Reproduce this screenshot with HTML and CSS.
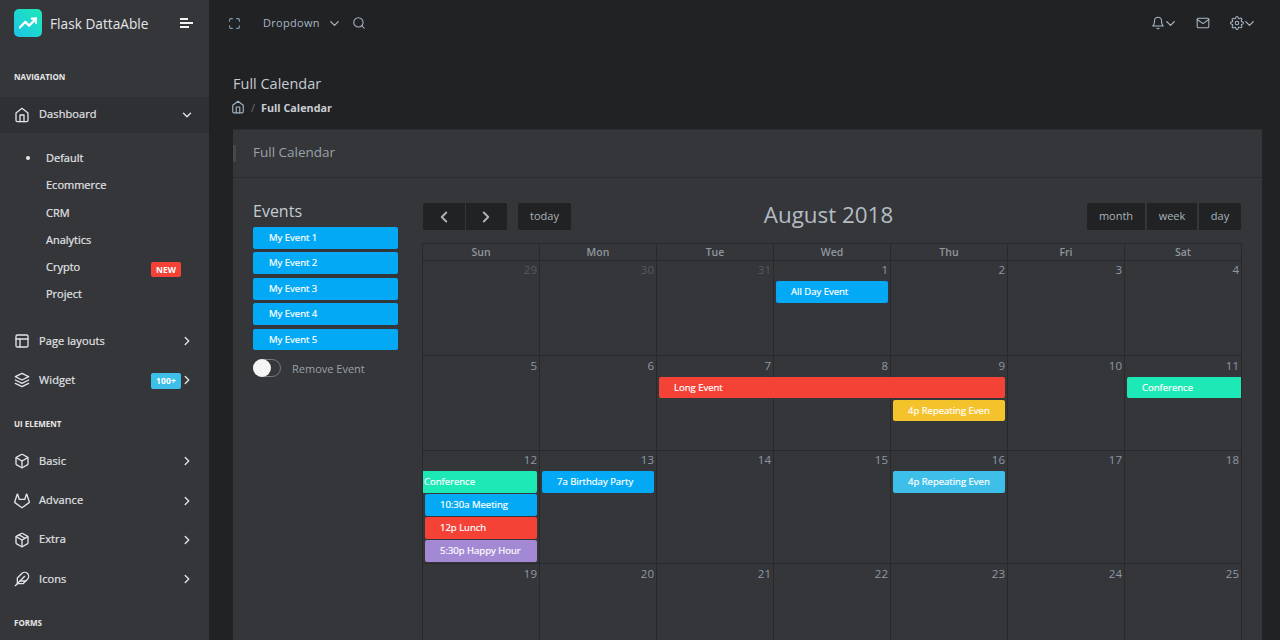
FILE: index.html
```html
<!DOCTYPE html>
<html lang="en">
<head>
    <meta charset="UTF-8">
    <title>Full Calendar</title>
    <link rel="stylesheet" href="styles.css">
</head>
<body>

<svg class="sprite" xmlns="http://www.w3.org/2000/svg">
    <symbol id="i-home" viewBox="0 0 24 24"><path d="M3 9l9-7 9 7v11a2 2 0 0 1-2 2H5a2 2 0 0 1-2-2z"/><polyline points="9 22 9 12 15 12 15 22"/></symbol>
    <symbol id="i-layout" viewBox="0 0 24 24"><rect x="3" y="3" width="18" height="18" rx="2"/><line x1="3" y1="9" x2="21" y2="9"/><line x1="9" y1="21" x2="9" y2="9"/></symbol>
    <symbol id="i-layers" viewBox="0 0 24 24"><polygon points="12 2 2 7 12 12 22 7 12 2"/><polyline points="2 17 12 22 22 17"/><polyline points="2 12 12 17 22 12"/></symbol>
    <symbol id="i-box" viewBox="0 0 24 24"><path d="M21 16V8a2 2 0 0 0-1-1.73l-7-4a2 2 0 0 0-2 0l-7 4A2 2 0 0 0 3 8v8a2 2 0 0 0 1 1.73l7 4a2 2 0 0 0 2 0l7-4A2 2 0 0 0 21 16z"/><polyline points="3.27 6.96 12 12.01 20.73 6.96"/><line x1="12" y1="22.08" x2="12" y2="12"/></symbol>
    <symbol id="i-package" viewBox="0 0 24 24"><line x1="16.5" y1="9.4" x2="7.5" y2="4.21"/><path d="M21 16V8a2 2 0 0 0-1-1.73l-7-4a2 2 0 0 0-2 0l-7 4A2 2 0 0 0 3 8v8a2 2 0 0 0 1 1.73l7 4a2 2 0 0 0 2 0l7-4A2 2 0 0 0 21 16z"/><polyline points="3.27 6.96 12 12.01 20.73 6.96"/><line x1="12" y1="22.08" x2="12" y2="12"/></symbol>
    <symbol id="i-gitlab" viewBox="0 0 24 24"><path d="M22.65 14.39L12 22.13 1.35 14.39a.84.84 0 0 1-.3-.94l1.22-3.78 2.44-7.51A.42.42 0 0 1 4.82 2a.43.43 0 0 1 .58 0 .42.42 0 0 1 .11.18l2.44 7.49h8.1l2.44-7.51A.42.42 0 0 1 18.6 2a.43.43 0 0 1 .58 0 .42.42 0 0 1 .11.18l2.44 7.51L23 13.45a.84.84 0 0 1-.35.94z"/></symbol>
    <symbol id="i-feather" viewBox="0 0 24 24"><path d="M20.24 12.24a6 6 0 0 0-8.49-8.49L5 10.5V19h8.5z"/><line x1="16" y1="8" x2="2" y2="22"/><line x1="17.5" y1="15" x2="9" y2="15"/></symbol>
    <symbol id="i-right" viewBox="0 0 24 24"><polyline points="9 18 15 12 9 6"/></symbol>
    <symbol id="i-left" viewBox="0 0 24 24"><polyline points="15 18 9 12 15 6"/></symbol>
    <symbol id="i-down" viewBox="0 0 24 24"><polyline points="6 9 12 15 18 9"/></symbol>
    <symbol id="i-max" viewBox="0 0 24 24"><path d="M8 3H5a2 2 0 0 0-2 2v3m18 0V5a2 2 0 0 0-2-2h-3m0 18h3a2 2 0 0 0 2-2v-3M3 16v3a2 2 0 0 0 2 2h3"/></symbol>
    <symbol id="i-search" viewBox="0 0 24 24"><circle cx="11" cy="11" r="8"/><line x1="21" y1="21" x2="16.65" y2="16.65"/></symbol>
    <symbol id="i-bell" viewBox="0 0 24 24"><path d="M18 8A6 6 0 0 0 6 8c0 7-3 9-3 9h18s-3-2-3-9"/><path d="M13.73 21a2 2 0 0 1-3.46 0"/></symbol>
    <symbol id="i-mail" viewBox="0 0 24 24"><path d="M4 4h16c1.1 0 2 .9 2 2v12c0 1.1-.9 2-2 2H4c-1.1 0-2-.9-2-2V6c0-1.1.9-2 2-2z"/><polyline points="22,6 12,13 2,6"/></symbol>
    <symbol id="i-gear" viewBox="0 0 24 24"><circle cx="12" cy="12" r="3"/><path d="M19.4 15a1.65 1.65 0 0 0 .33 1.82l.06.06a2 2 0 0 1 0 2.83 2 2 0 0 1-2.83 0l-.06-.06a1.65 1.65 0 0 0-1.82-.33 1.65 1.65 0 0 0-1 1.51V21a2 2 0 0 1-2 2 2 2 0 0 1-2-2v-.09A1.65 1.65 0 0 0 9 19.4a1.65 1.65 0 0 0-1.82.33l-.06.06a2 2 0 0 1-2.83 0 2 2 0 0 1 0-2.83l.06-.06a1.65 1.65 0 0 0 .33-1.82 1.65 1.65 0 0 0-1.51-1H3a2 2 0 0 1-2-2 2 2 0 0 1 2-2h.09A1.65 1.65 0 0 0 4.6 9a1.65 1.65 0 0 0-.33-1.82l-.06-.06a2 2 0 0 1 0-2.83 2 2 0 0 1 2.83 0l.06.06a1.65 1.65 0 0 0 1.82.33H9a1.65 1.65 0 0 0 1-1.51V3a2 2 0 0 1 2-2 2 2 0 0 1 2 2v.09a1.65 1.65 0 0 0 1 1.51 1.65 1.65 0 0 0 1.82-.33l.06-.06a2 2 0 0 1 2.83 0 2 2 0 0 1 0 2.83l-.06.06a1.65 1.65 0 0 0-.33 1.82V9a1.65 1.65 0 0 0 1.51 1H21a2 2 0 0 1 2 2 2 2 0 0 1-2 2h-.09a1.65 1.65 0 0 0-1.51 1z"/></symbol>
    <symbol id="i-trend" viewBox="0 0 24 24"><polyline points="23 6 13.5 15.5 8.5 10.5 1 18"/><polyline points="17 6 23 6 23 12"/></symbol>
</svg>

<div class="app">

    <aside class="sidebar">
        <div class="brand">
            <span class="logo"><svg class="icon logo-icon"><use href="#i-trend"/></svg></span>
            <span class="brand-name">Flask DattaAble</span>
            <span class="burger"><i class="bar-a"></i><i class="bar-b"></i><i class="bar-c"></i></span>
        </div>

        <div class="caption">NAVIGATION</div>
        <a class="nav-item nav-open">
            <svg class="icon nav-icon"><use href="#i-home"/></svg>
            <span class="nav-label">Dashboard</span>
            <svg class="icon nav-arrow"><use href="#i-down"/></svg>
        </a>
        <ul class="submenu">
            <li class="active">Default</li>
            <li>Ecommerce</li>
            <li>CRM</li>
            <li>Analytics</li>
            <li>Crypto <span class="badge badge-red">NEW</span></li>
            <li>Project</li>
        </ul>
        <a class="nav-item">
            <svg class="icon nav-icon"><use href="#i-layout"/></svg>
            <span class="nav-label">Page layouts</span>
            <svg class="icon nav-arrow"><use href="#i-right"/></svg>
        </a>
        <a class="nav-item">
            <svg class="icon nav-icon"><use href="#i-layers"/></svg>
            <span class="nav-label">Widget</span>
            <span class="badge badge-blue">100+</span>
            <svg class="icon nav-arrow"><use href="#i-right"/></svg>
        </a>

        <div class="caption caption-next">UI ELEMENT</div>
        <a class="nav-item">
            <svg class="icon nav-icon"><use href="#i-box"/></svg>
            <span class="nav-label">Basic</span>
            <svg class="icon nav-arrow"><use href="#i-right"/></svg>
        </a>
        <a class="nav-item">
            <svg class="icon nav-icon"><use href="#i-gitlab"/></svg>
            <span class="nav-label">Advance</span>
            <svg class="icon nav-arrow"><use href="#i-right"/></svg>
        </a>
        <a class="nav-item">
            <svg class="icon nav-icon"><use href="#i-package"/></svg>
            <span class="nav-label">Extra</span>
            <svg class="icon nav-arrow"><use href="#i-right"/></svg>
        </a>
        <a class="nav-item">
            <svg class="icon nav-icon"><use href="#i-feather"/></svg>
            <span class="nav-label">Icons</span>
            <svg class="icon nav-arrow"><use href="#i-right"/></svg>
        </a>

        <div class="caption caption-next">FORMS</div>
    </aside>

    <main class="main">
        <header class="topbar">
            <svg class="icon top-max"><use href="#i-max"/></svg>
            <span class="top-link">Dropdown</span>
            <svg class="icon top-chev top-chev-first"><use href="#i-down"/></svg>
            <svg class="icon top-icon top-search"><use href="#i-search"/></svg>
            <div class="top-right">
                <span class="top-group">
                    <svg class="icon top-icon"><use href="#i-bell"/></svg>
                    <svg class="icon top-chev"><use href="#i-down"/></svg>
                </span>
                <svg class="icon top-icon"><use href="#i-mail"/></svg>
                <span class="top-group">
                    <svg class="icon top-icon"><use href="#i-gear"/></svg>
                    <svg class="icon top-chev"><use href="#i-down"/></svg>
                </span>
            </div>
        </header>

        <div class="page-head">
            <h1 class="page-title">Full Calendar</h1>
            <div class="crumbs">
                <svg class="icon crumb-home"><use href="#i-home"/></svg>
                <span class="crumb-sep">/</span>
                <span class="crumb-now">Full Calendar</span>
            </div>
        </div>

        <section class="card">
            <div class="card-head"><h2 class="card-title">Full Calendar</h2></div>
            <div class="card-body">

                <div class="events-panel">
                    <h3 class="events-title">Events</h3>
                    <div class="drag-event">My Event 1</div>
                    <div class="drag-event">My Event 2</div>
                    <div class="drag-event">My Event 3</div>
                    <div class="drag-event">My Event 4</div>
                    <div class="drag-event">My Event 5</div>
                    <div class="remove-row">
                        <span class="switch"><span class="knob"></span></span>
                        <span class="remove-label">Remove Event</span>
                    </div>
                </div>

                <div class="calendar">
                    <div class="toolbar">
                        <div class="tool-left">
                            <button class="fc-btn fc-arrow fc-first"><svg class="icon"><use href="#i-left"/></svg></button>
                            <button class="fc-btn fc-arrow fc-last"><svg class="icon"><use href="#i-right"/></svg></button>
                            <button class="fc-btn fc-today">today</button>
                        </div>
                        <h2 class="month-title">August 2018</h2>
                        <div class="tool-right">
                            <button class="fc-btn fc-month fc-first">month</button>
                            <button class="fc-btn fc-week">week</button>
                            <button class="fc-btn fc-day fc-last">day</button>
                        </div>
                    </div>

                    <div class="grid">
                        <div class="dow-row">
                            <div class="dow">Sun</div><div class="dow">Mon</div><div class="dow">Tue</div><div class="dow">Wed</div><div class="dow">Thu</div><div class="dow">Fri</div><div class="dow">Sat</div>
                        </div>

                        <div class="week">
                            <div class="day c1 muted">29</div><div class="day c2 muted">30</div><div class="day c3 muted">31</div><div class="day c4">1</div><div class="day c5">2</div><div class="day c6">3</div><div class="day c7">4</div>
                            <div class="event blue c4 r2">All Day Event</div>
                        </div>

                        <div class="week week-low">
                            <div class="day c1">5</div><div class="day c2">6</div><div class="day c3">7</div><div class="day c4">8</div><div class="day c5">9</div><div class="day c6">10</div><div class="day c7">11</div>
                            <div class="event red c3 span3 r2">Long Event</div>
                            <div class="event green c7 r2 open-end">Conference</div>
                            <div class="event yellow c5 r3">4p Repeating Even</div>
                        </div>

                        <div class="week week-tall">
                            <div class="day c1">12</div><div class="day c2">13</div><div class="day c3">14</div><div class="day c4">15</div><div class="day c5">16</div><div class="day c6">17</div><div class="day c7">18</div>
                            <div class="event green c1 r2 open-start">Conference</div>
                            <div class="event blue c2 r2">7a Birthday Party</div>
                            <div class="event sky c5 r2">4p Repeating Even</div>
                            <div class="event blue c1 r3">10:30a Meeting</div>
                            <div class="event red c1 r4">12p Lunch</div>
                            <div class="event purple c1 r5">5:30p Happy Hour</div>
                        </div>

                        <div class="week week-low">
                            <div class="day c1">19</div><div class="day c2">20</div><div class="day c3">21</div><div class="day c4">22</div><div class="day c5">23</div><div class="day c6">24</div><div class="day c7">25</div>
                        </div>
                    </div>
                </div>

            </div>
        </section>
    </main>

</div>

</body>
</html>
```

FILE: styles.css
```css
* {
    box-sizing: border-box;
}
html, body {
    margin: 0;
    height: 100%;
    overflow: hidden;
}
body {
    font-family: "Open Sans", sans-serif;
    background-color: #212224;
    color: #adb7be;
    font-size: 12px;
}
h1, h2, h3 {
    margin: 0;
    font-weight: 400;
}
ul {
    list-style: none;
    margin: 0;
    padding: 0;
}
.sprite {
    display: none;
}
.icon {
    fill: none;
    stroke: currentColor;
    stroke-width: 2;
    stroke-linecap: round;
    stroke-linejoin: round;
    display: block;
    flex: none;
}
.app {
    display: flex;
    height: 640px;
    overflow: hidden;
}

/* sidebar */
.sidebar {
    width: 209px;
    flex: none;
    background-color: #35363a;
    color: #e1e3e6;
}
.brand {
    height: 46px;
    display: flex;
    align-items: center;
    padding-left: 14px;
}
.logo {
    width: 28px;
    height: 28px;
    border-radius: 5px;
    background: linear-gradient(-135deg, #1de9b6 0%, #1dc4e9 100%);
    display: flex;
    align-items: center;
    justify-content: center;
    color: #fff;
}
.logo-icon {
    width: 18px;
    height: 18px;
    stroke-width: 3;
}
.brand-name {
    margin-left: 8px;
    width: 130px;
    font-size: 13.7px;
    color: #e4e6e8;
}
.burger {
    display: flex;
    flex-direction: column;
    gap: 2px;
}
.burger i {
    display: block;
    height: 2px;
    background-color: #f4f4f4;
}
.bar-a {
    width: 8px;
}
.bar-b {
    width: 13px;
}
.bar-c {
    width: 9px;
}
.caption {
    font-size: 8px;
    font-weight: 700;
    line-height: 10px;
    padding: 26px 0 15px 14px;
    color: #e8e8e8;
}
.caption-next {
    padding-top: 19px;
    padding-bottom: 12.7px;
}
.nav-item {
    height: 39.3px;
    display: flex;
    align-items: center;
    padding-left: 14px;
    position: relative;
    font-size: 11px;
    font-weight: 500;
    letter-spacing: 0.1px;
    -webkit-text-stroke: 0.2px;
}
.nav-open {
    height: 36px;
    background-color: #2f3034;
}
.nav-icon {
    width: 16px;
    height: 16px;
}
.nav-label {
    margin-left: 9px;
    margin-top: -2px;
}
.nav-open .nav-label {
    margin-top: -4px;
}
.nav-arrow {
    position: absolute;
    left: 180px;
    width: 14px;
    height: 14px;
    stroke-width: 2.4;
}
.submenu {
    padding: 11.2px 0 14.1px;
}
.submenu li {
    height: 27.2px;
    line-height: 27px;
    padding-left: 46px;
    font-size: 11px;
    font-weight: 500;
    -webkit-text-stroke: 0.2px;
    position: relative;
}
.submenu .active::before {
    content: "";
    position: absolute;
    left: 26px;
    top: 12px;
    width: 4px;
    height: 4px;
    border-radius: 50%;
    background-color: #e8e8e8;
}
.badge {
    position: absolute;
    left: 151px;
    width: 30px;
    text-align: center;
    border-radius: 2px;
    color: #fff;
    font-size: 8.5px;
    font-weight: 700;
    -webkit-text-stroke: 0;
}
.badge-red {
    top: 9px;
    height: 15px;
    line-height: 15px;
    background-color: #f44236;
}
.badge-blue {
    top: 12px;
    height: 16px;
    line-height: 16px;
    background-color: #3ebfea;
}

/* main */
.main {
    flex: 1;
    min-width: 0;
    padding-left: 24px;
    padding-right: 18px;
}
.topbar {
    height: 46px;
    display: flex;
    align-items: center;
    color: #a9b7c6;
    font-size: 11px;
    letter-spacing: 0.3px;
}
.top-max {
    width: 13px;
    height: 13px;
    margin-left: -5px;
    color: #7f9fb8;
}
.top-link {
    margin-left: 22px;
    margin-top: -2px;
}
.top-chev {
    width: 15px;
    height: 15px;
    margin: 0 -2px;
}
.top-chev-first {
    margin: 0 -2px 0 7.5px;
}
.top-icon {
    width: 14px;
    height: 14px;
    stroke-width: 1.8;
}
.top-search {
    margin-left: 12px;
}
.top-right {
    margin-left: auto;
    margin-right: 7px;
    display: flex;
    align-items: center;
    gap: 20px;
}
.top-group {
    display: flex;
    align-items: center;
}
.page-head {
    padding-top: 28px;
    height: 83px;
}
.page-title {
    font-size: 14.5px;
    line-height: 19px;
    color: #c4ccd2;
}
.crumbs {
    display: flex;
    align-items: center;
    margin-top: 6px;
    height: 16px;
}
.crumb-home {
    width: 14px;
    height: 14px;
    margin-left: -2px;
    color: #9fb1c0;
}
.crumb-sep {
    margin: 0 6px;
    color: #6b6e73;
    font-size: 11px;
}
.crumb-now {
    font-size: 10.8px;
    font-weight: 700;
    color: #c9ced3;
}

/* card */
.card {
    background-color: #35363a;
    border-top: 1px solid #2c2d30;
    height: 520px;
}
.card-head {
    height: 48px;
    display: flex;
    align-items: center;
    padding-left: 20px;
    padding-bottom: 4px;
    border-bottom: 1px solid #2b2c2f;
    position: relative;
}
.card-head::before {
    content: "";
    position: absolute;
    left: 0;
    top: 15px;
    width: 3px;
    height: 17px;
    background-color: #46484c;
}
.card-title {
    font-size: 13.5px;
    color: #9aa1a8;
}
.card-body {
    display: flex;
    padding: 25px 20px 0;
}

/* events panel */
.events-panel {
    width: 145px;
    flex: none;
    margin-right: 24px;
}
.events-title {
    font-size: 16px;
    line-height: 22px;
    color: #c4ccd2;
    margin-bottom: 5px;
    margin-top: -3px;
}
.drag-event {
    height: 21.8px;
    line-height: 21px;
    margin-bottom: 3.6px;
    padding-left: 16px;
    background-color: #04a9f5;
    border-radius: 2px;
    color: #fff;
    font-size: 9.5px;
    font-weight: 500;
    -webkit-text-stroke: 0.2px;
}
.remove-row {
    display: flex;
    align-items: center;
    margin-top: 9px;
}
.switch {
    width: 28px;
    height: 18px;
    border: 1px solid #777a7f;
    border-radius: 9px;
    display: block;
}
.knob {
    display: block;
    width: 18px;
    height: 18px;
    margin: -1px 0 0 -1px;
    border-radius: 50%;
    background-color: #f5f5f5;
}
.remove-label {
    margin-left: 11px;
    font-size: 11px;
    color: #9aa1a8;
}

/* calendar */
.calendar {
    width: 820px;
    flex: none;
}
.toolbar {
    display: flex;
    align-items: center;
    justify-content: space-between;
    height: 27px;
    margin-bottom: 13px;
}
.tool-left, .tool-right {
    display: flex;
    width: 154px;
}
.tool-left {
    margin-left: 1px;
}
.tool-right {
    justify-content: flex-end;
    margin-right: 1px;
}
.month-title {
    font-size: 22.4px;
    color: #b4bcc3;
    margin-right: 7px;
    margin-top: -5px;
}
.fc-btn {
    height: 27px;
    background-color: #212224;
    border: none;
    color: #a9b3bb;
    font-family: "Open Sans", sans-serif;
    font-size: 11px;
    padding: 0 0 2px;
    display: flex;
    align-items: center;
    justify-content: center;
}
.fc-arrow {
    width: 41.5px;
    padding: 0;
}
.fc-arrow .icon {
    width: 18px;
    height: 18px;
    stroke-width: 2.6;
}
.fc-first {
    border-radius: 2px 0 0 2px;
    margin-right: 1px;
}
.fc-last {
    border-radius: 0 2px 2px 0;
}
.fc-today {
    width: 53px;
    margin-left: 11px;
    border-radius: 2px;
}
.fc-month {
    width: 58px;
    margin-right: 2px;
}
.fc-week {
    width: 50px;
    margin-right: 2px;
}
.fc-day {
    width: 42px;
}
.grid {
    border-right: 1px solid #28292c;
}
.dow-row, .week {
    display: grid;
    grid-template-columns: repeat(7, 117px);
    border-top: 1px solid #28292c;
}
.dow-row {
    height: 17px;
}
.dow {
    border-left: 1px solid #28292c;
    text-align: center;
    font-size: 10.5px;
    line-height: 17px;
    font-weight: 600;
    color: #8f969d;
}
.week {
    height: 95px;
    grid-template-rows: 20px auto auto auto auto 1fr;
}
.week-low {
    grid-template-rows: 21px auto auto auto auto 1fr;
}
.week-tall {
    height: 113px;
}
.day {
    grid-row: 1 / -1;
    border-left: 1px solid #28292c;
    text-align: right;
    padding: 1px 2px 0 0;
    font-size: 11.5px;
    line-height: 16px;
    color: #8e99a4;
}
.week-low .day {
    padding-top: 2px;
}
.muted {
    color: #56585c;
}
.c1 { grid-column-start: 1; }
.c2 { grid-column-start: 2; }
.c3 { grid-column-start: 3; }
.c4 { grid-column-start: 4; }
.c5 { grid-column-start: 5; }
.c6 { grid-column-start: 6; }
.c7 { grid-column-start: 7; }
.r2 { grid-row-start: 2; }
.r3 { grid-row-start: 3; }
.r4 { grid-row-start: 4; }
.r5 { grid-row-start: 5; }
.span3 { grid-column-end: span 3; }
.event {
    height: 22px;
    line-height: 21px;
    margin: 0 2px 1px 3px;
    padding-left: 15px;
    border-radius: 2px;
    color: #fff;
    font-size: 9.5px;
    font-weight: 500;
    -webkit-text-stroke: 0.2px;
    white-space: nowrap;
    overflow: hidden;
}
.week-low .event {
    height: 21px;
    margin-bottom: 2px;
}
.blue { background-color: #04a9f5; }
.red { background-color: #f44236; }
.green { background-color: #1de9b6; }
.yellow { background-color: #f4c22b; }
.sky { background-color: #3ebfea; }
.purple { background-color: #a389d4; }
.open-end {
    margin-right: 0;
    border-radius: 2px 0 0 2px;
}
.open-start {
    margin-left: 1px;
    padding-left: 1px;
    border-radius: 0 2px 2px 0;
}
```
